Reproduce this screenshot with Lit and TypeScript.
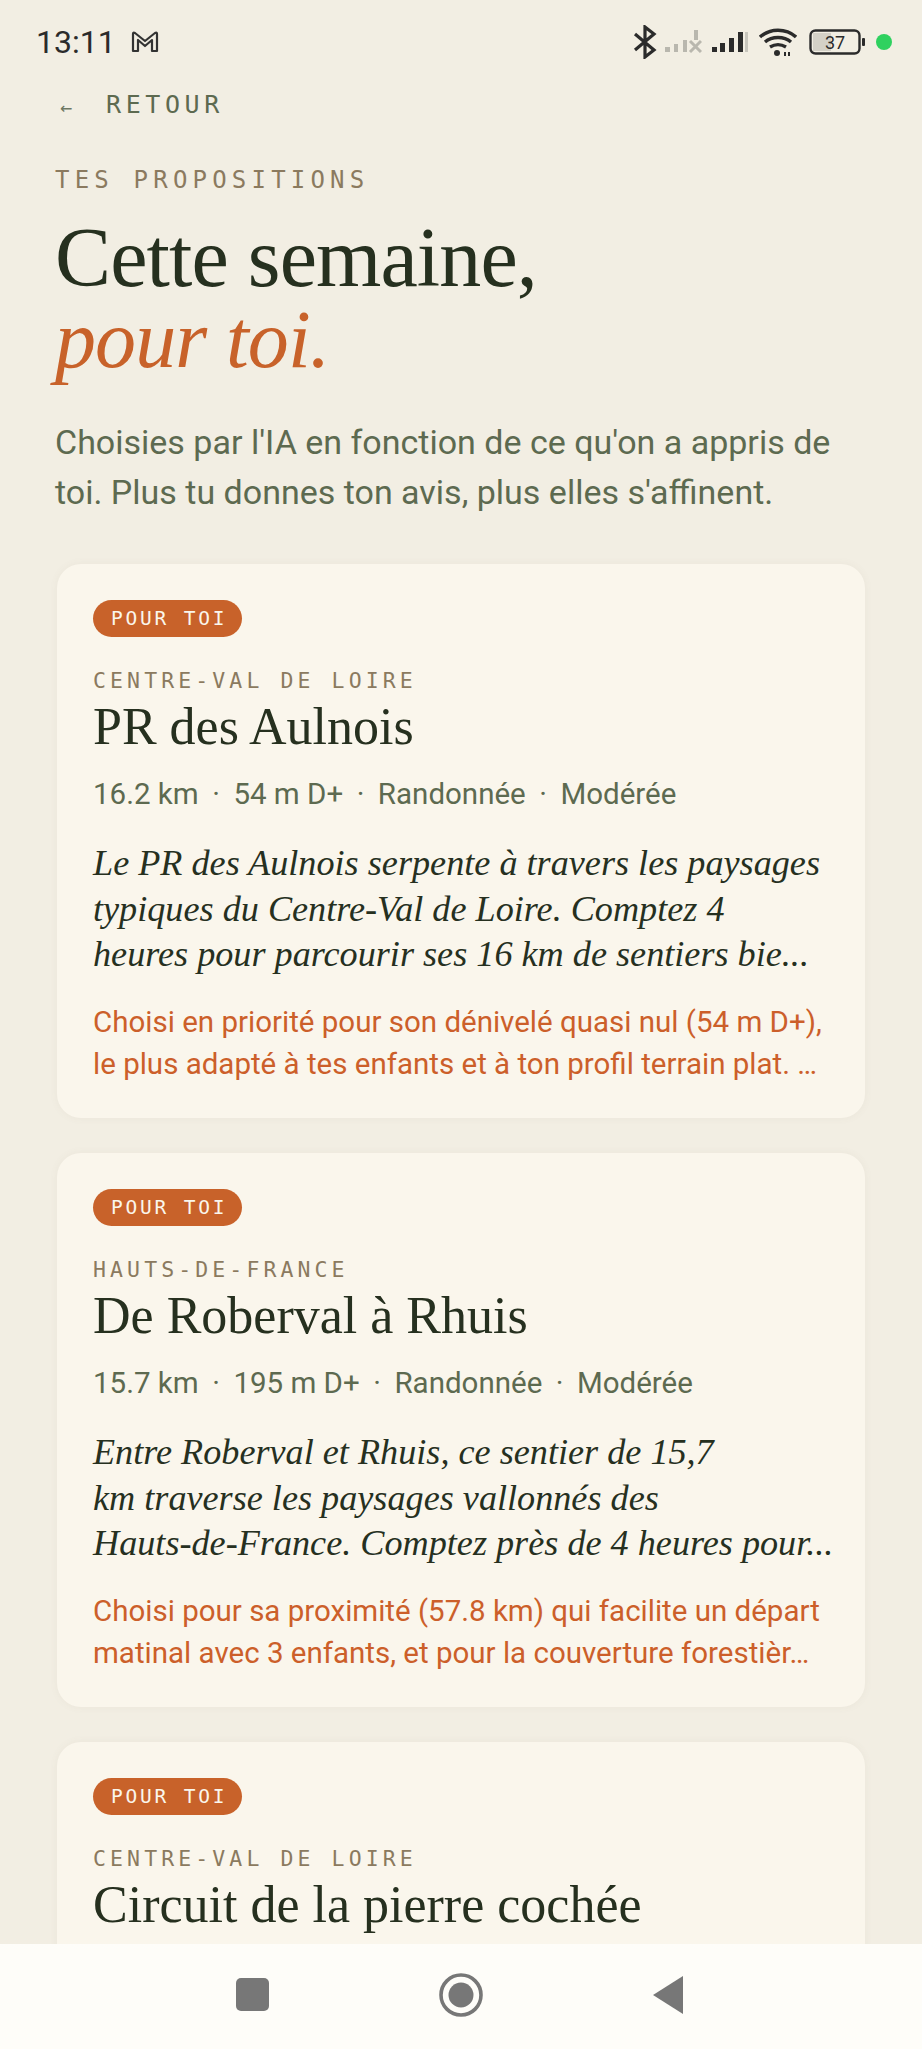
import { html, css, LitElement, svg } from 'lit';
import { customElement } from 'lit/decorators.js';

interface Walk {
  region: string;
  name: string;
  km: string;
  gain: string;
  desc: string[];
  why: string[];
}

const WALKS: Walk[] = [
  {
    region: 'CENTRE-VAL DE LOIRE',
    name: 'PR des Aulnois',
    km: '16.2 km',
    gain: '54 m D+',
    desc: [
      'Le PR des Aulnois serpente à travers les paysages',
      'typiques du Centre-Val de Loire. Comptez 4',
      'heures pour parcourir ses 16 km de sentiers bie...',
    ],
    why: [
      'Choisi en priorité pour son dénivelé quasi nul (54 m D+),',
      'le plus adapté à tes enfants et à ton profil terrain plat. …',
    ],
  },
  {
    region: 'HAUTS-DE-FRANCE',
    name: 'De Roberval à Rhuis',
    km: '15.7 km',
    gain: '195 m D+',
    desc: [
      'Entre Roberval et Rhuis, ce sentier de 15,7',
      'km traverse les paysages vallonnés des',
      'Hauts-de-France. Comptez près de 4 heures pour...',
    ],
    why: [
      'Choisi pour sa proximité (57.8 km) qui facilite un départ',
      'matinal avec 3 enfants, et pour la couverture forestièr…',
    ],
  },
  {
    region: 'CENTRE-VAL DE LOIRE',
    name: 'Circuit de la pierre cochée',
    km: '',
    gain: '',
    desc: [],
    why: [],
  },
];

@customElement('app-root')
export class AppRoot extends LitElement {
  static styles = css`
    :host {
      display: flex;
      flex-direction: column;
      height: 2049px;
      overflow: hidden;
      background: #f2eee3;
      font-family: Roboto, sans-serif;
      color: #26301f;
    }
    .status {
      flex: none;
      height: 84px;
      display: flex;
      align-items: center;
      justify-content: space-between;
      padding: 0 30px 0 36px;
      box-sizing: border-box;
    }
    .status .left,
    .status .right {
      display: flex;
      align-items: center;
    }
    .time {
      font-size: 32px;
      color: #2b2b2b;
      margin-right: 15px;
    }
    .content {
      flex: 1;
      min-height: 0;
      overflow: hidden;
      padding: 0 57px;
    }
    .back {
      font-family: 'DejaVu Sans Mono', monospace;
      font-size: 25px;
      letter-spacing: 4.6px;
      color: #5d6a50;
      display: flex;
      align-items: center;
      height: 40px;
      margin-left: 3px;
    }
    .back .arrow {
      font-size: 20px;
      letter-spacing: 0;
      width: 46px;
      color: #6d7763;
      padding-top: 6px;
    }
    .eyebrow {
      font-family: 'DejaVu Sans Mono', monospace;
      font-size: 24px;
      letter-spacing: 5.2px;
      color: #8b7a5f;
      margin: 40px 0 0 -2px;
      line-height: 32px;
    }
    h1 {
      font-family: 'Liberation Serif', serif;
      font-weight: 400;
      font-size: 84px;
      letter-spacing: -0.9px;
      line-height: 82px;
      margin: 21px 0 0 -2px;
      color: #26301f;
    }
    h1 em {
      display: block;
      font-size: 82px;
      color: #c8622a;
    }
    .intro {
      font-size: 34px;
      line-height: 50px;
      color: #5d6a50;
      margin: 36px 0 0 -2px;
      white-space: nowrap;
    }
    .cards {
      display: flex;
      flex-direction: column;
      gap: 35px;
      margin-top: 47px;
    }
    .card {
      background: #faf6ec;
      border-radius: 24px;
      padding: 36px 36px 0;
      height: 554px;
      box-sizing: border-box;
      flex: none;
      box-shadow: 0 0 8px rgba(120, 110, 80, 0.06);
    }
    .pill {
      display: inline-block;
      font-family: 'DejaVu Sans Mono', monospace;
      font-size: 19.5px;
      letter-spacing: 2.8px;
      line-height: 38px;
      height: 37px;
      padding: 0 15px 0 18px;
      background: #c8622a;
      color: #faf6ec;
      border-radius: 19px;
    }
    .region {
      font-family: 'DejaVu Sans Mono', monospace;
      font-size: 21.5px;
      letter-spacing: 4.1px;
      line-height: 30px;
      color: #8b7a5f;
      margin-top: 29px;
    }
    h2 {
      font-family: 'Liberation Serif', serif;
      font-weight: 400;
      font-size: 52px;
      line-height: 58px;
      margin: 2px 0 0;
      color: #26301f;
    }
    .meta {
      display: flex;
      gap: 13.5px;
      font-size: 29.5px;
      line-height: 40px;
      color: #5d6a50;
      margin-top: 18px;
    }
    .desc {
      font-family: 'Liberation Serif', serif;
      font-style: italic;
      font-size: 36.2px;
      line-height: 45.5px;
      color: #26301f;
      margin-top: 27px;
      white-space: nowrap;
    }
    .why {
      font-size: 29.5px;
      line-height: 42px;
      color: #cc5f2a;
      margin-top: 23px;
      white-space: nowrap;
    }
    .nav {
      flex: none;
      height: 105px;
      background: #fefdf9;
      display: flex;
      align-items: center;
      justify-content: center;
      gap: 170px;
      padding: 0 3px 4px 0;
      box-sizing: border-box;
    }
    svg {
      display: block;
    }
  `;

  private _walk(w: Walk) {
    return html`
      <div class="card">
        <span class="pill">POUR TOI</span>
        <div class="region">${w.region}</div>
        <h2>${w.name}</h2>
        ${w.km
          ? html`
              <div class="meta">
                <span>${w.km}</span><span>·</span><span>${w.gain}</span><span>·</span>
                <span>Randonnée</span><span>·</span><span>Modérée</span>
              </div>
              <div class="desc">${w.desc.map((l) => html`<div>${l}</div>`)}</div>
              <div class="why">${w.why.map((l) => html`<div>${l}</div>`)}</div>
            `
          : ''}
      </div>
    `;
  }

  private _statusIcons() {
    return html`
      <svg width="26" height="34" viewBox="0 0 26 34" fill="none" stroke="#2b2b2b" stroke-width="3.2" style="margin-right:7px">
        ${svg`<path d="M3 9l19 16-9 7V2l9 7L3 25" />`}
      </svg>
      <svg width="37" height="26" viewBox="0 0 37 26" style="margin-right:10px" fill="#b9b7ae">
        ${svg`<rect x="0" y="18" width="5" height="5" /><rect x="9" y="15" width="4" height="8" /><rect x="18" y="11" width="4" height="12" /><rect x="29" y="1" width="4" height="10" /><path d="M25 12l11 11M36 12L25 23" stroke="#b9b7ae" stroke-width="3" />`}
      </svg>
      <svg width="36" height="26" viewBox="0 0 36 26" fill="#2b2b2b" style="margin-right:11px">
        ${svg`<rect x="0" y="18" width="5" height="5" /><rect x="8" y="14" width="5" height="9" /><rect x="17" y="9" width="5" height="14" /><rect x="26" y="3" width="5" height="20" /><rect x="33" y="3" width="3" height="20" fill="#c8c6bd" />`}
      </svg>
      <svg width="38" height="28" viewBox="0 0 38 28" fill="none" stroke="#2b2b2b" stroke-width="3.4" style="margin-right:12px">
        ${svg`<path d="M1 9c10-9 26-9 36 0M6 14c7-6 19-6 26 0M11 19c5-3 11-3 16 0" /><circle cx="18" cy="25" r="3" fill="#2b2b2b" stroke="none" /><path d="M26 24v4M30 24v4" stroke-width="2" />`}
      </svg>
      <svg width="58" height="28" viewBox="0 0 58 28" style="margin-right:9px">
        ${svg`<rect x="1.5" y="2.5" width="49" height="23" rx="5" fill="none" stroke="#2b2b2b" stroke-width="2.4" />
        <rect x="4" y="5" width="18" height="18" fill="#d4d1c7" />
        <text x="26" y="21" text-anchor="middle" font-family="Roboto, sans-serif" font-size="18" fill="#2b2b2b">37</text>
        <rect x="53" y="10" width="3" height="8" rx="1" fill="#2b2b2b" />`}
      </svg>
      <svg width="16" height="16" viewBox="0 0 16 16">
        ${svg`<circle cx="8" cy="8" r="8" fill="#2fd15f" />`}
      </svg>
    `;
  }

  render() {
    return html`
      <div class="status">
        <div class="left">
          <span class="time">13:11</span>
          <svg width="28" height="22" viewBox="0 0 28 22" fill="none" stroke="#333" stroke-width="2.2" stroke-linejoin="round">
            ${svg`<path d="M2 20V3q0-2 2-1l10 8 10-8q2-1 2 1v17h-5V9l-7 6-7-6v11z" />`}
          </svg>
        </div>
        <div class="right">${this._statusIcons()}</div>
      </div>
      <div class="content">
        <div class="back"><span class="arrow">←</span>RETOUR</div>
        <div class="eyebrow">TES PROPOSITIONS</div>
        <h1>Cette semaine,<em>pour toi.</em></h1>
        <p class="intro">
          Choisies par l'IA en fonction de ce qu'on a appris de<br />
          toi. Plus tu donnes ton avis, plus elles s'affinent.
        </p>
        <div class="cards">${WALKS.map((w) => this._walk(w))}</div>
      </div>
      <div class="nav">
        <svg width="33" height="33" viewBox="0 0 33 33">
          ${svg`<rect width="33" height="33" rx="5" fill="#777" />`}
        </svg>
        <svg width="44" height="44" viewBox="0 0 44 44">
          ${svg`<circle cx="22" cy="22" r="20" fill="none" stroke="#777" stroke-width="3.6" /><circle cx="22" cy="22" r="12.5" fill="#777" />`}
        </svg>
        <svg width="30" height="38" viewBox="0 0 30 38">
          ${svg`<path d="M30 0v38L0 19z" fill="#777" />`}
        </svg>
      </div>
    `;
  }
}
